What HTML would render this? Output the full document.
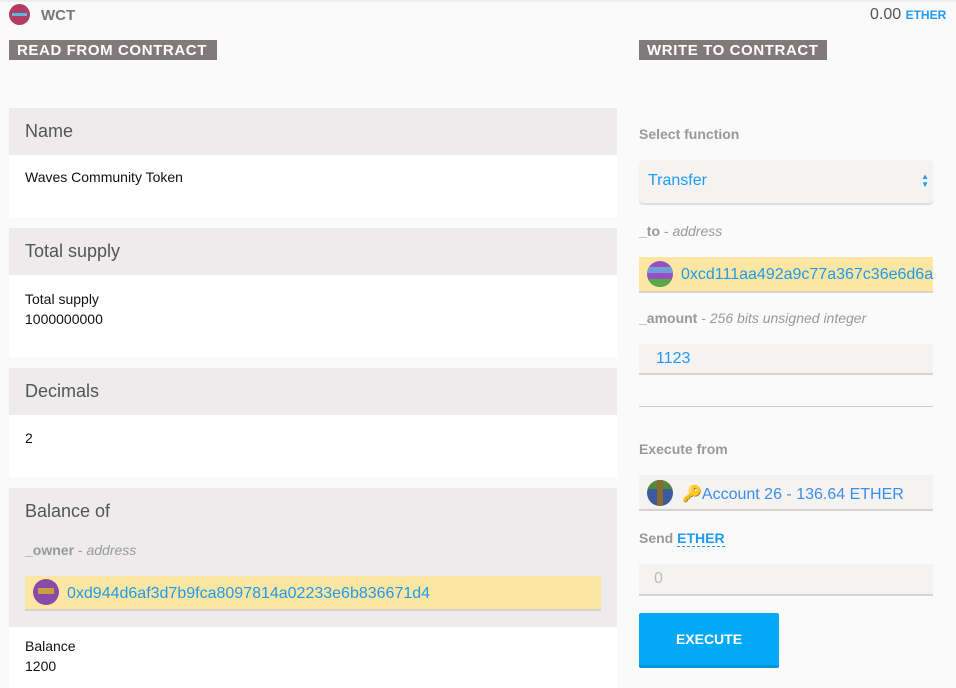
<!DOCTYPE html>
<html><head><meta charset="utf-8"><style>
*{margin:0;padding:0;box-sizing:border-box}
body{width:956px;height:688px;overflow:hidden;background:#fafafa;font-family:"Liberation Sans",sans-serif;position:relative}
.a{position:absolute}
.tag{background:#827a7a;color:#fff;font-weight:bold;font-size:15px;padding:2px 8px;height:20px;line-height:17px;letter-spacing:0.6px;white-space:nowrap;overflow:hidden}
.hd{background:#edebeb;color:#555;font-size:18px;padding-left:16px;line-height:47px;width:608px;left:9px}
.bd{background:#fff;width:608px;left:9px;font-size:14px;color:#111;padding:14px 16px}
.lbl{color:#999;font-size:14px}
.lbl b{color:#999}
.inp{background:#f4f3f2;border-bottom:2px solid #d6d2d2;width:294px;left:639px;color:#1f9af0;font-size:16px}
.av{border-radius:50%;width:26px;height:26px;position:absolute;overflow:hidden}
</style></head><body>
<div class="a" style="left:0;top:0;width:956px;height:2px;background:#eee"></div>
<div class="av" style="left:9px;top:4px;width:21px;height:21px;background:#b23c63"><div style="position:absolute;left:3px;top:9px;width:15px;height:3px;background:#5bd"></div></div>
<div class="a" style="left:41px;top:7px;font-weight:bold;font-size:15px;color:#777">WCT</div>
<div class="a" style="left:870px;top:6px;font-size:16px;color:#555">0.00 <span style="color:#1f9af0;font-weight:bold;font-size:12px">ETHER</span></div>
<div class="a tag" style="left:9px;top:40px;width:208px">READ FROM CONTRACT</div>
<div class="a tag" style="left:639px;top:40px;width:188px">WRITE TO CONTRACT</div>

<div class="a hd" style="top:108px">Name</div>
<div class="a bd" style="top:155px;height:62px">Waves Community Token</div>
<div class="a hd" style="top:228px">Total supply</div>
<div class="a bd" style="top:275px;height:82px;padding-top:14px;line-height:20px">Total supply<br>1000000000</div>
<div class="a hd" style="top:368px">Decimals</div>
<div class="a bd" style="top:415px;height:62px;padding-top:15px">2</div>
<div class="a hd" style="top:488px;height:139px">Balance of</div>
<div class="a lbl" style="left:25px;top:542px"><b>_owner</b> - <i>address</i></div>
<div class="a" style="left:25px;top:576px;width:576px;height:35px;background:#fde6a1;border-bottom:2px solid #d6d2d2"></div>
<div class="av" style="left:33px;top:579px;background:#8a4aa8"><div style="position:absolute;left:5px;top:9px;width:16px;height:6px;background:#c9a040"></div></div>
<div class="a" style="left:67px;top:585px;color:#1f9af0;font-size:16px">0xd944d6af3d7b9fca8097814a02233e6b836671d4</div>
<div class="a bd" style="top:627px;height:61px;padding-top:9px;line-height:20px">Balance<br>1200</div>

<div class="a lbl" style="left:639px;top:126px;font-weight:bold">Select function</div>
<div class="a" style="left:639px;top:160px;width:294px;height:43px;background:#f4f3f2;border-radius:4px;box-shadow:0 2px 1px #ddd;color:#1f9af0;font-size:16px;padding:12px 9px">Transfer<span style="position:absolute;right:4px;top:13px;font-size:8px;line-height:8px">▲<br>▼</span></div>
<div class="a lbl" style="left:639px;top:223px"><b>_to</b> - <i>address</i></div>
<div class="a" style="left:639px;top:257px;width:294px;height:36px;background:#fde6a1;border-bottom:2px solid #d6d2d2;overflow:hidden"><div class="av" style="left:8px;top:4px;background:#9a4fc0"><div style="position:absolute;left:0;top:6px;width:26px;height:6px;background:#6fa0d8"></div><div style="position:absolute;left:0;top:18px;width:26px;height:8px;background:#5aa84c"></div></div><span style="position:absolute;left:42px;top:9px;color:#1f9af0;font-size:16px;white-space:nowrap">0xcd111aa492a9c77a367c36e6d6a</span></div>
<div class="a lbl" style="left:639px;top:310px"><b>_amount</b> - <i>256 bits unsigned integer</i></div>
<div class="a inp" style="top:344px;height:31px;padding:6px 17px">1123</div>
<div class="a" style="left:639px;top:406px;width:294px;height:1px;background:#ccc"></div>
<div class="a lbl" style="left:639px;top:441px;font-weight:bold">Execute from</div>
<div class="a inp" style="top:475px;height:36px;padding:9px 0 0 43px;color:#3b8ee8">🔑Account 26 - 136.64 ETHER</div>
<div class="av" style="left:647px;top:480px;background:#3c5aa0"><div style="position:absolute;left:0;top:0;width:26px;height:9px;background:#4f8a3a"></div><div style="position:absolute;left:10px;top:0;width:6px;height:26px;background:#8a6a30"></div></div>
<div class="a lbl" style="left:639px;top:530px;font-weight:bold">Send <span style="color:#1f9af0;border-bottom:1px dashed #1f9af0">ETHER</span></div>
<div class="a inp" style="top:564px;height:32px;padding:6px 15px;color:#bbb">0</div>
<div class="a" style="left:639px;top:613px;width:140px;height:55px;background:#03a9f4;border-bottom:3px solid #0395d8;border-radius:2px;color:#fff;font-weight:bold;font-size:14px;text-align:center;line-height:52px">EXECUTE</div>
</body></html>
